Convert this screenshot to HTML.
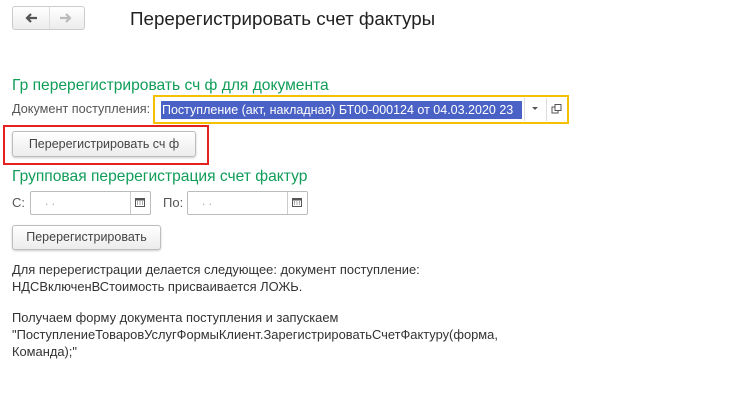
<!DOCTYPE html>
<html><head><meta charset="utf-8"><style>
*{box-sizing:border-box;margin:0;padding:0}
body{width:729px;height:404px;background:#fff;position:relative;overflow:hidden;font-family:"Liberation Sans",Arial,sans-serif;color:#333;font-size:12px}
.a{position:absolute;white-space:nowrap}
.btn{position:absolute;border:1px solid #bdbdbd;border-radius:3px;background:linear-gradient(#fff,#ececec);box-shadow:0 1px 2px rgba(0,0,0,.2);color:#444;font-size:12.5px;text-align:center}
.green{color:#0f9d58;font-size:15.6px}
.inp{position:absolute;border:1px solid #bbb;border-radius:2px;background:#fff}
.t{position:absolute;white-space:nowrap;left:12px;font-size:12.9px;color:#333}
</style></head><body>
<div class="btn" style="left:12px;top:6px;width:73px;height:24px;box-shadow:none;border-color:#ccc"></div>
<div class="a" style="left:49px;top:7px;width:1px;height:22px;background:#ddd"></div>
<svg class="a" style="left:24px;top:12px" width="14" height="12"><path d="M13 6H4M7 2L3 6l4 4" stroke="#555" stroke-width="2.2" fill="none"/></svg>
<svg class="a" style="left:59px;top:12px" width="14" height="12"><path d="M1 6h9M7 2l4 4-4 4" stroke="#bbb" stroke-width="2.2" fill="none"/></svg>
<div class="a" style="left:130px;top:8px;font-size:18.8px;color:#222">Перерегистрировать счет фактуры</div>

<div class="a green" style="left:12px;top:77px">Гр перерегистрировать сч ф для документа</div>
<div class="a" style="left:12px;top:102px;color:#555;font-size:12.7px">Документ поступления:</div>
<div class="a" style="left:153px;top:95px;width:416px;height:29px;border:2px solid #f5c000;background:#fff"></div>
<div class="a" style="left:161px;top:101px;width:361px;height:18px;background:#4a62c6;color:#fff;font-size:12.5px;line-height:18px;padding-left:1px;overflow:hidden">Поступление (акт, накладная) БТ00-000124 от 04.03.2020 23</div>
<div class="a" style="left:524px;top:98px;width:1px;height:23px;background:#ddd"></div>
<div class="a" style="left:546px;top:98px;width:1px;height:23px;background:#ddd"></div>
<svg class="a" style="left:532px;top:107px" width="6" height="4"><path d="M0 0h6L3 3z" fill="#555"/></svg>
<svg class="a" style="left:551px;top:104px" width="11" height="11"><rect x="1" y="3" width="6" height="6" fill="none" stroke="#555"/><rect x="4" y="0.5" width="6" height="6" fill="#fff" stroke="#555"/></svg>

<div class="a" style="left:3px;top:125px;width:206px;height:40px;border:2px solid #e52020"></div>
<div class="btn" style="left:12px;top:131px;width:184px;height:26px;line-height:24px">Перерегистрировать сч ф</div>

<div class="a green" style="left:12px;top:168px">Групповая перерегистрация счет фактур</div>
<div class="a" style="left:12px;top:195px;font-size:13px;color:#555">С:</div>
<div class="inp" style="left:30px;top:191px;width:121px;height:24px"></div>
<div class="a" style="left:130px;top:192px;width:1px;height:22px;background:#ccc"></div>
<div class="a" style="left:45px;top:194px;color:#aaa">. .</div>
<div class="a" style="left:163px;top:195px;font-size:13px;color:#555">По:</div>
<div class="inp" style="left:187px;top:191px;width:121px;height:24px"></div>
<div class="a" style="left:287px;top:192px;width:1px;height:22px;background:#ccc"></div>
<div class="a" style="left:202px;top:194px;color:#aaa">. .</div>
<svg class="a" style="left:135px;top:197px" width="10" height="10"><rect x="0.5" y="1.5" width="9" height="8" fill="none" stroke="#555"/><rect x="0.5" y="1.5" width="9" height="2" fill="#555"/><path d="M2 5h1M4.5 5h1M7 5h1M2 7h1M4.5 7h1M7 7h1" stroke="#555"/></svg>
<svg class="a" style="left:292px;top:197px" width="10" height="10"><rect x="0.5" y="1.5" width="9" height="8" fill="none" stroke="#555"/><rect x="0.5" y="1.5" width="9" height="2" fill="#555"/><path d="M2 5h1M4.5 5h1M7 5h1M2 7h1M4.5 7h1M7 7h1" stroke="#555"/></svg>

<div class="btn" style="left:12px;top:225px;width:149px;height:25px;line-height:23px">Перерегистрировать</div>

<div class="t" style="top:262px">Для перерегистрации делается следующее: документ поступление:</div>
<div class="t" style="top:279px">НДСВключенВСтоимость присваивается ЛОЖЬ.</div>
<div class="t" style="top:310px">Получаем форму документа поступления и запускаем</div>
<div class="t" style="top:327px">"ПоступлениеТоваровУслугФормыКлиент.ЗарегистрироватьСчетФактуру(форма,</div>
<div class="t" style="top:344px">Команда);"</div>
</body></html>
